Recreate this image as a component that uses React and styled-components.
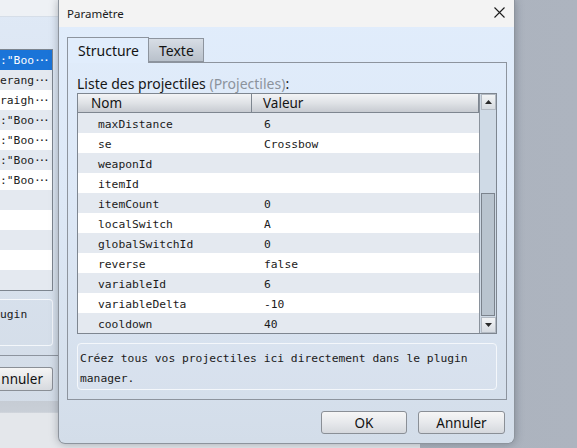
import React from "react";
import styled, { createGlobalStyle } from "styled-components";

const GlobalStyle = createGlobalStyle`
  html, body {
    margin: 0;
    padding: 0;
    overflow: hidden;
    background: #adb4bf;
  }
  * {
    box-sizing: border-box;
  }
`;

const ui = `"Noto Sans", "Open Sans", sans-serif`;
const mono = `"DejaVu Sans Mono", "Liberation Mono", monospace`;

const params = [
  { name: "maxDistance", value: "6" },
  { name: "se", value: "Crossbow" },
  { name: "weaponId", value: "" },
  { name: "itemId", value: "" },
  { name: "itemCount", value: "0" },
  { name: "localSwitch", value: "A" },
  { name: "globalSwitchId", value: "0" },
  { name: "reverse", value: "false" },
  { name: "variableId", value: "6" },
  { name: "variableDelta", value: "-10" },
  { name: "cooldown", value: "40" },
];

// visible tails of the list behind the dialog
const backItems = [':"Boo', "erang", "raigh", ':"Boo', ':"Boo', ':"Boo', ':"Boo', "", "", "", "", ""];

function App() {
  return (
    <>
      <GlobalStyle />
      <Desktop>
        <BackWindow>
          <BackTitle />
          <BackColumn>
            <BackList>
              {backItems.map((text, i) => (
                <BackRow key={i} $selected={i === 0} $odd={i % 2 === 1}>
                  {text}
                  {text && <Dots>···</Dots>}
                </BackRow>
              ))}
            </BackList>
            <BackNote>ugin</BackNote>
          </BackColumn>
          <BackPanelEdge />
          <BackColumn>
            <BackButton>nnuler</BackButton>
          </BackColumn>
          <BackFooter />
        </BackWindow>

        <Dialog>
          <TitleBar>
            <Title>Paramètre</Title>
            <CloseButton>
              <svg width="11" height="11" viewBox="0 0 11 11">
                <path d="M0.5 0.5 L10.5 10.5 M10.5 0.5 L0.5 10.5" stroke="#1c1c1c" strokeWidth="1.1" />
              </svg>
            </CloseButton>
          </TitleBar>

          <DialogBody>
            <Tabs>
              <Tab $active>Structure</Tab>
              <Tab>Texte</Tab>
            </Tabs>
            <Panel>
              <Label>
                Liste des projectiles <Muted>(Projectiles)</Muted>:
              </Label>
              <Table>
                <TableMain>
                  <HeaderRow>
                    <HeaderCell $first>Nom</HeaderCell>
                    <HeaderCell>Valeur</HeaderCell>
                  </HeaderRow>
                  {params.map((p, i) => (
                    <Row key={p.name} $odd={i % 2 === 0}>
                      <NameCell>{p.name}</NameCell>
                      <ValueCell>{p.value}</ValueCell>
                    </Row>
                  ))}
                </TableMain>
                <Scrollbar>
                  <ScrollButton>
                    <svg width="7" height="4" viewBox="0 0 7 4">
                      <path d="M0 4 L3.5 0 L7 4 Z" fill="#2a2a2a" />
                    </svg>
                  </ScrollButton>
                  <ScrollTrack>
                    <Thumb />
                  </ScrollTrack>
                  <ScrollButton>
                    <svg width="7" height="4" viewBox="0 0 7 4">
                      <path d="M0 0 L7 0 L3.5 4 Z" fill="#2a2a2a" />
                    </svg>
                  </ScrollButton>
                </Scrollbar>
              </Table>
              <Description>
                Créez tous vos projectiles ici directement dans le plugin
                <br />
                manager.
              </Description>
            </Panel>
            <Footer>
              <Button>OK</Button>
              <Button $wide>Annuler</Button>
            </Footer>
          </DialogBody>
        </Dialog>
      </Desktop>
    </>
  );
}

export default App;

const Desktop = styled.div`
  position: relative;
  width: 577px;
  height: 448px;
  overflow: hidden;
  background: linear-gradient(90deg, #a7aeb9 0%, #adb4bf 100%);
`;

const BackWindow = styled.div`
  position: absolute;
  left: 0;
  top: 0;
  width: 420px;
  height: 448px;
  display: flex;
  flex-direction: column;
  background: linear-gradient(180deg, #dfe9f6 0%, #d2dbe6 100%);
`;

const BackTitle = styled.div`
  height: 17px;
  background: #eef1f5;
  border-bottom: 1px solid #d6dee8;
`;

const BackColumn = styled.div`
  width: 53px;
  display: flex;
  flex-direction: column;
`;

const BackList = styled.div`
  margin-top: 32px;
  border-top: 1px solid #7d858f;
  border-right: 1px solid #7d858f;
  border-bottom: 1px solid #7d858f;
  background: #ffffff;
`;

const BackRow = styled.div`
  height: 20px;
  line-height: 20px;
  padding-top: 1px;
  font-family: ${mono};
  font-size: 11.3px;
  text-align: right;
  white-space: nowrap;
  overflow: hidden;
  padding-right: 7px;
  color: ${(p) => (p.$selected ? "#ffffff" : "#1b1b1b")};
  background: ${(p) => (p.$selected ? "#1a74d8" : p.$odd ? "#e4e9f0" : "#ffffff")};
`;

const Dots = styled.span`
  letter-spacing: -2.3px;
  margin-right: 2px;
`;

const BackNote = styled.div`
  margin-top: 8px;
  height: 47px;
  border: 1px solid #f4f7fb;
  border-left: none;
  border-radius: 0 4px 4px 0;
  font-family: ${mono};
  font-size: 11.3px;
  line-height: 20px;
  padding: 5px 28px 0 0;
  text-align: right;
  color: #1b1b1b;
`;

const BackPanelEdge = styled.div`
  margin-top: 9px;
  height: 0;
  border-top: 1px solid #8d949e;
`;

const BackButton = styled.div`
  margin-top: 11px;
  height: 24px;
  border: 1px solid #8a8f96;
  border-left: none;
  border-radius: 0 3px 3px 0;
  background: linear-gradient(180deg, #f5f5f5 0%, #d7dadf 100%);
  font-family: ${ui};
  font-size: 13.5px;
  line-height: 22px;
  text-align: right;
  padding-right: 9px;
  color: #111;
`;

const BackFooter = styled.div`
  margin-top: 10px;
  flex: 1;
  background: linear-gradient(180deg, #c6ccd4 0%, #c9cfd7 24%, #e4e7eb 26%, #e4e7eb 100%);
`;

const Dialog = styled.div`
  position: absolute;
  left: 58px;
  top: 0;
  width: 457px;
  height: 444px;
  display: flex;
  flex-direction: column;
  border: 1px solid #8d949d;
  border-top: none;
  border-radius: 0 0 7px 7px;
  background: linear-gradient(180deg, #e1edfc 0%, #dde8f6 45%, #d3dde9 100%);
  box-shadow: 0 0 9px rgba(40, 48, 60, 0.35);
  overflow: hidden;
`;

const TitleBar = styled.div`
  height: 27px;
  display: flex;
  align-items: center;
  justify-content: space-between;
  padding: 0 9px 1px 8px;
  background: #f3f3f3;
`;

const Title = styled.span`
  font-family: ${ui};
  font-size: 11.5px;
  color: #1a1a1a;
`;

const CloseButton = styled.div`
  width: 11px;
  height: 11px;
  display: flex;
  margin-top: -2px;
`;

const DialogBody = styled.div`
  flex: 1;
  display: flex;
  flex-direction: column;
  padding: 10px 7px 0 8px;
`;

const Tabs = styled.div`
  display: flex;
  align-items: flex-end;
  height: 25px;
  position: relative;
  z-index: 1;
`;

const Tab = styled.div`
  height: ${(p) => (p.$active ? "26px" : "24px")};
  margin-bottom: ${(p) => (p.$active ? "-1px" : "0")};
  padding: 0 9px 0 10px;
  padding-bottom: ${(p) => (p.$active ? "1px" : "0")};
  display: flex;
  align-items: center;
  font-family: ${ui};
  font-size: 14px;
  color: #141414;
  border: 1px solid #8d949e;
  border-bottom: ${(p) => (p.$active ? "none" : "1px solid #8d949e")};
  border-left: ${(p) => (p.$active ? "1px solid #8d949e" : "none")};
  background: ${(p) =>
    p.$active ? "#e1edfc" : "linear-gradient(180deg, #d7dde5 0%, #b9c1cb 100%)"};
`;

const Panel = styled.div`
  height: 338px;
  border: 1px solid #8d949e;
  padding: 12px 9px 9px 9px;
  display: flex;
  flex-direction: column;
`;

const Label = styled.div`
  height: 18px;
  font-family: ${ui};
  font-size: 14px;
  line-height: 17px;
  color: #161616;
  white-space: nowrap;
`;

const Muted = styled.span`
  color: #8c939c;
`;

const Table = styled.div`
  height: 241px;
  display: flex;
  border: 1px solid #7e8690;
  background: #ffffff;
`;

const TableMain = styled.div`
  flex: 1;
  display: flex;
  flex-direction: column;
`;

const HeaderRow = styled.div`
  height: 19px;
  display: flex;
  border-bottom: 1px solid #7e8690;
  background: linear-gradient(180deg, #f3f4f6 0%, #dfe2e6 50%, #c7cbd1 100%);
`;

const HeaderCell = styled.div`
  width: ${(p) => (p.$first ? "174px" : "auto")};
  flex: ${(p) => (p.$first ? "none" : "1")};
  display: flex;
  align-items: center;
  padding-left: ${(p) => (p.$first ? "13px" : "11px")};
  border-right: 1px solid #7e8690;
  font-family: ${ui};
  font-size: 13.5px;
  color: #141414;
`;

const Row = styled.div`
  height: 20px;
  display: flex;
  align-items: center;
  padding-top: 3px;
  background: ${(p) => (p.$odd ? "#e4e9f0" : "#ffffff")};
  font-family: ${mono};
  font-size: 11.3px;
  color: #1b1b1b;
`;

const NameCell = styled.div`
  width: 174px;
  padding-left: 20px;
`;

const ValueCell = styled.div`
  flex: 1;
  padding-left: 12px;
`;

const Scrollbar = styled.div`
  width: 17px;
  display: flex;
  flex-direction: column;
  border-left: 1px solid #8a929c;
  background: #cfdae6;
`;

const ScrollButton = styled.div`
  height: 16px;
  margin: 0 0 0 1px;
  width: 15px;
  display: flex;
  align-items: center;
  justify-content: center;
  background: linear-gradient(180deg, #f2f4f6 0%, #d6dbe1 100%);
  border: 1px solid #b3bac3;
`;

const ScrollTrack = styled.div`
  flex: 1;
  display: flex;
  flex-direction: column;
  justify-content: flex-end;
  padding: 0 1px 1px 1px;
`;

const Thumb = styled.div`
  height: 123px;
  background: #b9c4cf;
  border: 1px solid #7b838d;
`;

const Description = styled.div`
  margin-top: 9px;
  height: 47px;
  border: 1px solid #f4f7fb;
  border-radius: 4px;
  padding: 5px 2px 0 2px;
  font-family: ${mono};
  font-size: 11.3px;
  line-height: 20px;
  color: #1b1b1b;
  background: rgba(255, 255, 255, 0.06);
`;

const Footer = styled.div`
  display: flex;
  justify-content: flex-end;
  gap: 11px;
  margin-top: 11px;
  padding-right: 2px;
`;

const Button = styled.div`
  width: ${(p) => (p.$wide ? "87px" : "86px")};
  height: 23px;
  display: flex;
  align-items: center;
  justify-content: center;
  border: 1px solid #8a8f96;
  border-radius: 3px;
  background: linear-gradient(180deg, #f6f6f6 0%, #e7e9ec 50%, #d5d8dd 100%);
  font-family: ${ui};
  font-size: 13.5px;
  color: #111;
`;
